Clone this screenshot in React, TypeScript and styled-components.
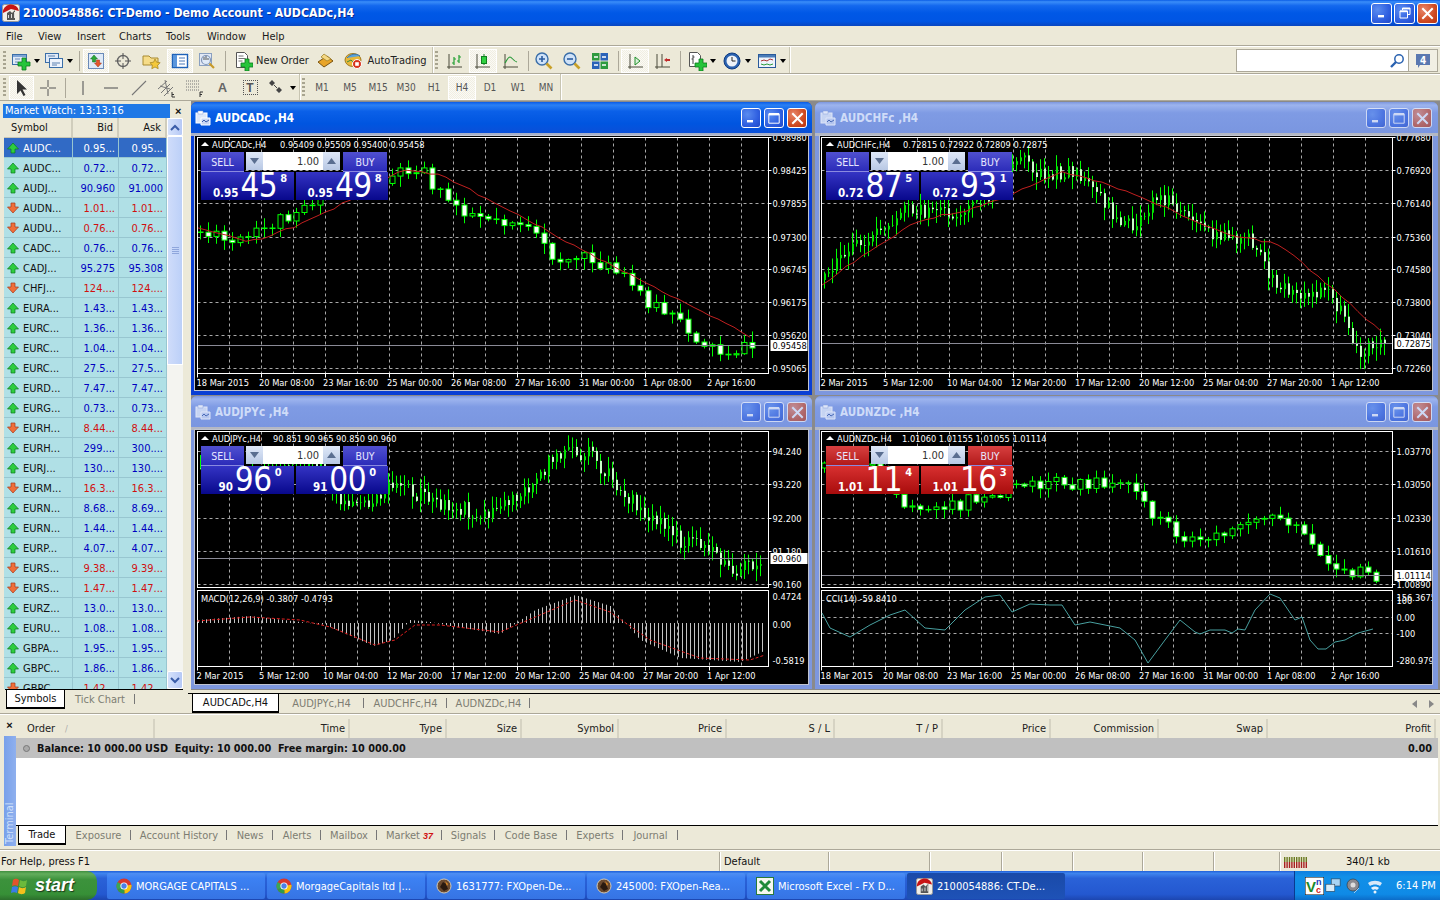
import React from "react";
import styled, { createGlobalStyle } from "styled-components";

const FONT = `"DejaVu Sans Condensed", "Noto Sans", "Liberation Sans", sans-serif`;

const Global = createGlobalStyle`
  html, body { margin: 0; padding: 0; background: #ece9d8; }
  body { font-family: ${FONT}; font-size: 11px; color: #000; overflow: hidden; }
  * { box-sizing: border-box; }
`;

const Root = styled.div`
  width: 1440px; height: 900px; display: flex; flex-direction: column; overflow: hidden; background: #ece9d8;
`;

/* ---------- title bar ---------- */
const TitleBar = styled.div`
  height: 26px; flex: none; display: flex; align-items: center; padding: 0 2px 0 2px;
  background: linear-gradient(#0a5ce6 0%, #3a8df8 7%, #1468ee 22%, #0058e6 50%, #0055e4 82%, #0a46c0 100%);
`;
const TitleText = styled.span`
  color: #fff; font: bold 12.2px ${FONT}; margin-left: 3px; flex: 1; text-shadow: 1px 1px 0 #0a2a90;
`;
const WinBtn = styled.div<{ $close?: boolean; $small?: boolean; $dim?: boolean }>`
  width: ${p => (p.$small ? 20 : 21)}px; height: ${p => (p.$small ? 20 : 21)}px; margin-left: ${p => (p.$small ? 3 : 2)}px;
  border: 1px solid #fff; border-radius: 3px; display: flex; align-items: center; justify-content: center;
  background: ${p => p.$close ? "radial-gradient(circle at 30% 30%, #e8866a, #cf4a22 60%, #b8330f)" : "radial-gradient(circle at 30% 30%, #5a8cf0, #2f5fe0 60%, #2048c8)"};
  opacity: ${p => (p.$dim ? 0.62 : 1)};
`;

/* ---------- menu ---------- */
const MenuBar = styled.div`
  height: 20px; flex: none; display: flex; align-items: center; padding-left: 6px; background: #ece9d8;
`;
const MenuItem = styled.span<{ $w: number }>`
  width: ${p => p.$w}px; font-size: 11px; color: #1a1a1a;
`;

/* ---------- toolbars ---------- */
const ToolRow = styled.div<{ $h: number }>`
  height: ${p => p.$h}px; flex: none; display: flex; align-items: center; padding-left: 2px;
  border-top: 1px solid #fff; box-shadow: 0 -1px 0 #aca899; background: #ece9d8;
`;
const Grip = styled.div`
  width: 7px; height: 20px; flex: none; margin-right: 0;
  background: repeating-linear-gradient(#a8a490 0 2px, #ece9d8 2px 4px) 1px 0 / 3px 100% no-repeat;
`;
const ToolBtn = styled.div<{ $w: number; $on?: boolean }>`
  width: ${p => p.$w}px; height: 24px; flex: none; display: flex; align-items: center; justify-content: center; gap: 3px;
  color: #333; font-size: 11px;
  ${p => p.$on ? `background: repeating-conic-gradient(#fbfaf5 0 25%, #f0eee2 0 50%) 0 0 / 2px 2px; outline: 1px solid #fff; outline-offset: -1px; box-shadow: inset 0 0 0 1px #ddd;` : ""}
`;
const ToolSep = styled.div<{ $w: number }>`
  width: ${p => p.$w}px; height: 20px; flex: none; position: relative;
  &::after { content: ""; position: absolute; left: 50%; top: 0; bottom: 0; width: 1px; background: #aca899; }
`;
const GroupEnd = styled.div`
  width: 2px; height: 27px; flex: none; background: #fff; border-left: 1px solid #c8c5b2;
`;
const TfLabel = styled.span`
  color: #555; font-size: 10px;
`;
const Caret = styled.i`
  width: 0; height: 0; border: 3px solid transparent; border-top: 4px solid #000; border-bottom: 0; display: block;
`;
const Spacer = styled.div`flex: 1;`;
const SearchBox = styled.div`
  width: 173px; height: 23px; border: 1px solid #aca899; background: #fff; display: flex; align-items: center; justify-content: flex-end; padding-right: 3px;
`;
const ChatBtn = styled.div`
  width: 29px; height: 23px; margin-right: 2px; border: 1px solid #aca899; border-left: 0; background: #f1efe4; display: flex; align-items: center; justify-content: center;
`;

/* ---------- main ---------- */
const Main = styled.div`
  height: 613px; flex: none; display: flex; border-top: 1px solid #aca899;
`;
const WatchPanel = styled.div`
  width: 188px; flex: none; display: flex; flex-direction: column; background: #ece9d8; padding: 2px 5px 0 3px; position: relative;
`;
const WatchHead = styled.div`
  height: 15px; flex: none; display: flex; align-items: center;
`;
const WatchTitle = styled.div`
  width: 167px; height: 14px; background: #1f78e6; color: #fff; font-size: 11px; line-height: 14px; padding-left: 2px;
`;
const CloseX = styled.span`
  font: bold 11px "Liberation Sans", sans-serif; margin-left: 5px; color: #111;
`;
const WatchBody = styled.div`
  flex: none; height: 571px; display: flex; overflow: hidden; margin-left: 1px;
`;
const WatchTable = styled.div`
  width: 163px; flex: none; overflow: hidden;
`;
const WatchHeader = styled.div`
  height: 20px; display: grid; grid-template-columns: 69px 46px 48px; background: #ece9d8; border-bottom: 1px solid #c9c6b5;
`;
const HeadCell = styled.div<{ $right?: boolean }>`
  display: flex; align-items: center; color: #111; font-size: 11px;
  justify-content: ${p => (p.$right ? "flex-end" : "flex-start")};
  padding: ${p => (p.$right ? "0 4px 0 0" : "0 0 0 7px")};
  border-right: 2px solid #d0cdbc;
`;
const Row = styled.div<{ $sel?: boolean; $down?: boolean }>`
  height: 20px; display: grid; grid-template-columns: 69px 46px 48px;
  background: ${p => (p.$sel ? "#316ac5" : "#b0e0e6")};
  color: ${p => (p.$sel ? "#fff" : p.$down ? "#d01010" : "#0000c0")};
`;
const Cell = styled.div<{ $sym?: boolean }>`
  border-right: 1px solid #98c6d0; border-bottom: 1px solid #98c6d0; display: flex; align-items: center; font-size: 11px; gap: 4px;
  justify-content: ${p => (p.$sym ? "flex-start" : "flex-end")};
  padding: ${p => (p.$sym ? "1px 0 0 3px" : "1px 3px 0 0")};
  white-space: nowrap; overflow: hidden;
`;
const SymText = styled.span<{ $sel?: boolean }>` color: ${p => (p.$sel ? "#fff" : "#111")}; `;
const ScrollBar = styled.div`
  width: 16px; flex: none; display: flex; flex-direction: column; background: #f4f4f0;
`;
const ScrollBtn = styled.div`
  height: 18px; flex: none; border: 1px solid #fff; border-radius: 2px; background: linear-gradient(90deg, #d6e2fb, #b6c9f6); display: flex; align-items: center; justify-content: center;
`;
const ScrollThumb = styled.div`
  height: 229px; flex: none; border: 1px solid #fff; background: linear-gradient(90deg, #cfdcfa, #bcd0f8); display: flex; align-items: center; justify-content: center;
`;
const ThumbGrip = styled.div`
  width: 7px; height: 8px; background: repeating-linear-gradient(#8fa6dc 0 1px, transparent 1px 2px);
`;
const PanelTabs = styled.div`
  display: flex; border-top: 1px solid #000; height: 20px; flex: none; margin-left: 2px; margin-right: 0;
`;
const ActiveTab = styled.div<{ $w: number }>`
  width: ${p => p.$w}px; background: #fff; border: 1px solid #000; border-top: 0; border-bottom-width: 2px; display: flex; align-items: center; justify-content: center; color: #111; font-size: 11px; margin-left: 1px;
`;
const PlainTab = styled.div<{ $w: number; $plain?: boolean }>`
  width: ${p => p.$w}px; display: flex; align-items: center; justify-content: center; color: #7d7d72; font-size: 11px; gap: 3px;
  position: relative;
  ${p => p.$plain ? "" : `&::after { content: ""; position: absolute; right: 0; top: 4px; bottom: 5px; width: 1px; background: #777; }`}
`;
const Right = styled.div`
  flex: 1; display: flex; flex-direction: column; min-width: 0;
`;
const Mdi = styled.div`
  height: 589px; flex: none; display: grid; grid-template-columns: 621px 623px; grid-auto-rows: 293px; column-gap: 3px; row-gap: 1px; padding: 1px 2px 0 3px; background: linear-gradient(90deg, #ece9d8 3px, #8a8a8a 3px);
`;
const ChartWin = styled.div<{ $active?: boolean; $right?: boolean }>`
  display: flex; flex-direction: column; border-radius: 6px 6px 0 0; overflow: hidden;
  background: ${p => (p.$active ? "#0a3fd4" : "#7d97de")};
  padding: 0 ${p => (p.$right ? 6 : 4)}px 5px ${p => (p.$right ? 5 : 4)}px;
`;
const ChartTitle = styled.div<{ $active?: boolean; $right?: boolean }>`
  height: 34px; flex: none; display: flex; align-items: center; padding-top: 1px; margin: 0 ${p => (p.$right ? -6 : -4)}px 0 ${p => (p.$right ? -5 : -4)}px; padding-left: ${p => (p.$right ? 5 : 4)}px; padding-right: ${p => (p.$right ? 6 : 5)}px;
  background: ${p => p.$active
    ? "linear-gradient(#0a5ce6 0%, #2b80f4 10%, #0b60e8 30%, #0055e0 70%, #0a4fd8 100%)"
    : "linear-gradient(#7d97de 0%, #9db4ee 10%, #7f9be4 35%, #7a96e0 100%)"};
  border-bottom: 3px solid ${p => (p.$active ? "#a8b0c8" : "#b4b8c4")};
`;
const ChartName = styled.span<{ $active?: boolean }>`
  flex: 1; margin-left: 4px; font: bold 11.6px ${FONT}; color: ${p => (p.$active ? "#fff" : "#cfdcf8")};
`;
const ChartBody = styled.div`
  position: relative; flex: 1; background: #000; overflow: hidden; box-shadow: 0 0 0 1px #c0c4d0;
`;
const ChartSvg = styled.svg`
  display: block; width: 100%; height: 100%;
`;
const ChartLabel = styled.text`
  font-family: ${FONT}; font-size: 9.2px; fill: #fff;
`;
const BoxLabel = styled.text`
  font-family: ${FONT}; font-size: 9.2px; fill: #000;
`;

/* trade panel */
const TradePanel = styled.div`
  position: absolute; left: 6px; top: 16px; width: 187px; display: grid; grid-template-columns: 93px 94px; grid-template-rows: 20px 28px;
`;
const TopRow = styled.div`
  grid-column: 1 / 3; display: flex;
`;
const ActBtn = styled.div<{ $red?: boolean; $w: number; $ml?: number }>`
  width: ${p => p.$w}px; margin-left: ${p => p.$ml || 0}px;
  background: ${p => p.$red ? "linear-gradient(#d84040, #b01818)" : "linear-gradient(#5050d0, #2a2ab8)"};
  color: #e8e8ff; font-size: 10.5px; display: flex; align-items: center; justify-content: center;
  box-shadow: inset 0 -1px 0 #8a8ae0;
`;
const Step = styled.div<{ $flush?: boolean }>`
  width: 17px; background: linear-gradient(#dfe8f8, #b8c8e4); display: flex; align-items: center; justify-content: center; margin-left: ${p => (p.$flush ? 0 : 2)}px; margin-bottom: 2px;
`;
const Lot = styled.div`
  width: 60px; background: #fff; color: #333; font-size: 11px; display: flex; align-items: center; justify-content: flex-end; padding-right: 4px; margin-bottom: 2px;
`;
const Quote = styled.div<{ $red?: boolean; $ml?: number }>`
  margin-left: ${p => p.$ml || 0}px; color: #fff; display: flex; align-items: flex-end; justify-content: center; position: relative; padding-left: 5px;
  background: ${p => p.$red ? "linear-gradient(#d83030, #a80c0c)" : "linear-gradient(#3434c4, #08088c)"};
`;
const QSmall = styled.span`
  font: bold 11.5px ${FONT}; margin-bottom: 0; margin-right: 2px;
`;
const QBig = styled.span`
  font: 33px/28px ${FONT}; letter-spacing: -0.5px;
`;
const QSup = styled.span`
  font: bold 11px ${FONT}; align-self: flex-start; margin: 0 0 0 3px;
`;

/* chart tab bar */
const ChartTabs = styled.div`
  flex: 1; display: flex; margin-top: 3px; border-top: 1px solid #000; padding-left: 3px; height: 20px; position: relative;
`;
const TabArrows = styled.div`
  position: absolute; right: 6px; top: 3px; display: flex; gap: 10px; align-items: center; height: 14px;
`;

/* ---------- terminal ---------- */
const Terminal = styled.div`
  height: 136px; flex: none; display: flex; border-top: 1px solid #aca899; box-shadow: inset 0 1px 0 #fff; padding: 5px 2px 3px 3px;
`;
const TermSide = styled.div`
  width: 13px; flex: none; display: flex; flex-direction: column; align-items: center;
`;
const SideLabel = styled.div`
  flex: 1; margin-top: 5px; width: 12px; background: linear-gradient(90deg, #8fb0ee, #78a0ea); color: #cfe0fa; font-size: 11px; writing-mode: vertical-rl; transform: rotate(180deg); text-align: left; line-height: 12px; padding-top: 2px;
`;
const TermMain = styled.div`
  flex: 1; display: flex; flex-direction: column; min-width: 0;
`;
const TermHead = styled.div`
  height: 19px; flex: none; display: flex; background: #ece9d8;
`;
const Col = styled.div<{ $w: number; $left?: boolean }>`
  width: ${p => p.$w}px; flex: none; color: #222; font-size: 11px; display: flex; align-items: center; gap: 10px;
  justify-content: ${p => (p.$left ? "flex-start" : "flex-end")};
  padding: ${p => (p.$left ? "0 0 0 11px" : "0 3px 0 0")};
  border-right: 2px solid #d6d3c3;
`;
const Balance = styled.div`
  height: 20px; flex: none; display: flex; align-items: center; background: #c0c0c0; color: #111; font-weight: bold; font-size: 10.8px; padding: 0 6px 0 7px; gap: 7px;
`;
const BalDot = styled.span`
  width: 7px; height: 7px; border-radius: 50%; border: 1px solid #777; background: #aaa; display: block; flex: none;
`;
const BalText = styled.span` flex: 1; white-space: pre; `;
const TermBlank = styled.div` flex: 1; background: #fff; `;
const TermTabs = styled.div`
  height: 21px; flex: none; display: flex; border-top: 1px solid #000; padding-left: 1px; padding-bottom: 1px;
`;
const MarketBadge = styled.b`
  font: italic bold 9px "Liberation Sans", sans-serif; color: #d01010;
`;
const SortMark = styled.span` color: #aaa; font-size: 9px; `;

/* ---------- status bar ---------- */
const Status = styled.div`
  height: 22px; flex: none; display: flex; border-top: 1px solid #aca899; box-shadow: inset 0 1px 0 #fff; padding-top: 2px;
`;
const StatusCell = styled.div<{ $w: number; $first?: boolean }>`
  width: ${p => p.$w}px; flex: none; font-size: 11px; color: #111; display: flex; align-items: center; gap: 38px; padding-left: ${p => (p.$first ? 1 : 4)}px;
  ${p => (p.$first ? "" : "border-left: 1px solid #aca899; box-shadow: inset 1px 0 0 #fff;")}
`;

/* ---------- taskbar ---------- */
const Taskbar = styled.div`
  height: 29px; flex: none; display: flex; align-items: stretch;
  background: linear-gradient(#1f5fd8 0%, #3f85ee 8%, #2a62d8 25%, #2458d0 80%, #1c46b0 100%);
`;
const StartBtn = styled.div`
  width: 97px; flex: none; display: flex; align-items: center; gap: 5px; padding-left: 10px; margin-right: 10px;
  border-radius: 0 10px 10px 0; background: linear-gradient(#3f8f3f 0%, #62ad5c 10%, #3c923c 30%, #379037 80%, #2c6e2c 100%);
`;
const StartText = styled.span`
  color: #fff; font: italic bold 18px "Liberation Sans", sans-serif; text-shadow: 1px 1px 1px #1a3a1a;
`;
const TaskBtn = styled.div<{ $on?: boolean }>`
  width: 158px; flex: none; margin: 2px 2px 1px 0; border-radius: 2px; display: flex; align-items: center; gap: 4px; padding-left: 9px; color: #fff; font-size: 11px; white-space: nowrap;
  background: ${p => p.$on ? "linear-gradient(#1a4aa8, #1e52b7)" : "linear-gradient(#4f8ef2, #3c81f3 20%, #3674e4)"};
`;
const Tray = styled.div`
  width: 146px; margin-left: auto; flex: none; display: flex; align-items: center; padding-left: 10px; gap: 1px; color: #fff; font-size: 11px; border-left: 1px solid #0a3a90; white-space: nowrap;
  background: linear-gradient(#0f7fe0, #1290e8 20%, #0f8ae6 80%, #0c6cc8);
`;
const TrayTime = styled.span` margin-left: 11px; font-size: 11px; white-space: nowrap; `;

/* ---------- icons ---------- */
const Svg: React.FC<{ s?: number; w?: number; h?: number; children: React.ReactNode }> = ({ s = 20, w, h, children }) => (
  <svg width={w ?? s} height={h ?? s} viewBox={`0 0 ${w ?? s} ${h ?? s}`} style={{ display: "block", flex: "none" }}>{children}</svg>
);
const Plus = ({ x = 0, y = 0 }: { x?: number; y?: number }) => (
  <path transform={`translate(${x} ${y})`} d="M4 0h4v4h4v4H8v4H4V8H0V4h4z" fill="#25c43a" stroke="#0d7a1e" strokeWidth=".8" />
);
const MtLogo = ({ s = 18 }: { s?: number }) => (
  <svg width={s} height={s} viewBox="0 0 18 18" style={{ display: "block", flex: "none" }}>
    <rect x=".5" y=".5" width="17" height="17" rx="2" fill="#f2efe8" stroke="#999" />
    <path d="M1 9a8 7.500 0 0 1 16-2L9 5z" fill="#c81414" />
    <path d="M5 16V9l3-2 2 2 3-3v10z" fill="#555" />
    <path d="M6 11h1v3H6zm3-1h1v4H9zm3-2h1v6h-1z" fill="#ddd" />
  </svg>
);
const ChromeIcon = () => (
  <Svg s={16}>
    <circle cx="8" cy="8" r="7.500" fill="#d8372c" />
    <path d="M8 8 1.500 11.700A7.500 7.500 0 0 1 1.600 4z" fill="#3aa655" />
    <path d="M8 8l7.400-1.200a7.500 7.500 0 0 1-7 8.700z" fill="#f4c20d" />
    <path d="M8 8 1.500 11.700A7.500 7.500 0 0 0 8.600 15.500z" fill="#2f9b4d" />
    <circle cx="8" cy="8" r="3.600" fill="#fff" /><circle cx="8" cy="8" r="2.700" fill="#4a80e8" />
  </Svg>
);
const CoinIcon = () => (
  <Svg s={16}>
    <circle cx="8" cy="8" r="7" fill="#6a4a30" stroke="#d0c8b8" />
    <path d="M4 9l3-5 3 2 2 5-4 2z" fill="#2a1a10" /><path d="M9 3l3 3-1 2z" fill="#e08a20" />
  </Svg>
);
const ExcelIcon = () => (
  <Svg s={18}>
    <rect x=".5" y=".5" width="17" height="17" fill="#f5f8f0" stroke="#2a7a3a" />
    <path d="M4 4l10 10M14 4 4 14" stroke="#1e8a38" strokeWidth="3" />
  </Svg>
);
const WinFlag = () => (
  <Svg s={20}>
    <path d="M3 4c3-2 4-1 6 0l-1 6c-2-1-4-1-6 0z" fill="#e2542c" />
    <path d="M10 4c2 1 4 2 7 0l-1 6c-3 2-5 1-7 0z" fill="#6cba3c" />
    <path d="M2 11c2-1 4-1 6 0l-1 6c-2-1-4-1-6 0z" fill="#3a7ce8" />
    <path d="M9 11c2 1 4 2 7 0l-1 6c-3 2-5 1-7 0z" fill="#f4c01c" />
  </Svg>
);
const Min = () => <svg width="10" height="10" viewBox="0 0 10 10"><rect x="1" y="7" width="6" height="2.400" fill="#fff" /></svg>;
const Max = () => <svg width="12" height="12" viewBox="0 0 12 12"><path d="M.8 1.800h10.400v9.400H.8z" fill="none" stroke="#fff" /><rect x="1" y="1" width="10" height="2.400" fill="#fff" /></svg>;
const Restore = () => <svg width="12" height="12" viewBox="0 0 12 12"><path d="M3.500 3V1h7.500v6.500H9M1 4h7.500v7H1z" fill="none" stroke="#fff" /><rect x="1" y="3.600" width="7.500" height="1.600" fill="#fff" /><rect x="3.500" y="1" width="7.500" height="1.400" fill="#fff" /></svg>;
const CloseI = () => <svg width="13" height="13" viewBox="0 0 13 13"><path d="M2 2l9 9M11 2l-9 9" stroke="#fff" strokeWidth="2" strokeLinecap="square" /></svg>;

const WinChartIcon = ({ dim }: { dim?: boolean }) => (
  <svg width="16" height="16" viewBox="0 0 16 16" style={{ display: "block", flex: "none", opacity: dim ? 0.75 : 1 }}>
    <rect x="1" y="3" width="11" height="10" fill="#dfe8f8" stroke="#fff" />
    <path d="M3 1h5v3H3z" fill="#fff" stroke="#8aa0d8" strokeWidth=".5" />
    <path d="M6 8h9v7H6z" fill="#c8d6f4" stroke="#fff" />
    <path d="M7 12l2-2 2 2 3-2" stroke="#3a5ca8" fill="none" />
  </svg>
);

const I = {
  newChart: <Svg><rect x="1.500" y="3.500" width="14" height="10" fill="#dfe9f7" stroke="#3a6ea8" /><rect x="2" y="4" width="13" height="2" fill="#7fa4d6" /><path d="M4 8h5M4 11h3" stroke="#6a8ab8" /><Plus x={7} y={7} /></Svg>,
  profiles: <Svg><rect x="1.500" y="2.500" width="13" height="9" fill="#dfe9f7" stroke="#3a6ea8" /><rect x="5.500" y="7.500" width="13" height="9" fill="#eef3fb" stroke="#3a6ea8" /><path d="M8 12h8M8 14h5M4 5h7" stroke="#5a80b0" /></Svg>,
  watch: <Svg><rect x="2.500" y="2.500" width="15" height="15" fill="#dfeaf8" stroke="#6a8ab8" /><path d="M8 4l3.500 4H9.500v3h-3V8H4.500z" fill="#2aa838" stroke="#106a1a" strokeWidth=".5" /><path d="M12 16l-3.500-4h2V9h3v3h2z" fill="#e4572c" stroke="#a03010" strokeWidth=".5" /></Svg>,
  crossCircle: <Svg><circle cx="10" cy="10" r="5.500" fill="none" stroke="#666" strokeWidth="1.400" /><path d="M10 2v6M10 12v6M2 10h6M12 10h6" stroke="#555" /></Svg>,
  folderStar: <Svg><path d="M1 5h6l2 2h7v7H1z" fill="#f6dc88" stroke="#a88a30" /><path d="M13 8l1.600 3.200 3.600.5-2.600 2.500.6 3.500-3.200-1.700-3.200 1.700.6-3.500L8 11.700l3.600-.5z" fill="#f4c83a" stroke="#a0801a" strokeWidth=".7" /></Svg>,
  nav: <Svg><rect x="2.500" y="3.500" width="15" height="13" fill="#fff" stroke="#1e62b8" strokeWidth="1.400" /><rect x="3" y="4" width="4" height="12" fill="#5a96dc" /><path d="M9 7h6M9 10h6M9 13h6" stroke="#4a78b8" /></Svg>,
  term: <Svg><rect x="2.500" y="2.500" width="12" height="12" fill="#e2e8f4" stroke="#8aa0c0" /><circle cx="9" cy="9" r="4.500" fill="#dfeaf8" stroke="#7f95b8" strokeWidth="1.200" /><path d="M7 9V6M9 9V5M11 9V7" stroke="#555" /><path d="M12.500 12.500l4.500 4.500" stroke="#c89a28" strokeWidth="2.200" /></Svg>,
  order: <Svg><path d="M3.500 1.500h8l3 3v12h-11z" fill="#fff" stroke="#555" /><path d="M5.500 5h5M5.500 7.500h7M5.500 10h4" stroke="#777" /><Plus x={8} y={8} /></Svg>,
  gold: <Svg><path d="M2 11l9-6 6 5-9 6z" fill="#e8a428" stroke="#7a5410" /><path d="M8 3l7 5-4 2-6-4z" fill="#f4d884" stroke="#9a7a20" strokeWidth=".7" /></Svg>,
  auto: <Svg><ellipse cx="9" cy="9" rx="8" ry="6.500" fill="#e8b83a" stroke="#a07a20" /><path d="M3 7c3-4 9-5 13-2" fill="#5aa4dc" stroke="#3a78b0" /><path d="M3 11l4-2 3 3" fill="none" stroke="#3a8a3a" /><circle cx="13" cy="13" r="4.500" fill="#d8341c" stroke="#fff" /><rect x="11.200" y="11.200" width="3.600" height="3.600" fill="#fff" /></Svg>,
  bars: <Svg><path d="M4 3v13h13" fill="none" stroke="#4a4a3a" /><path d="M2 16h2M4 18v-2" stroke="#4a4a3a" /><path d="M9 6v8M7 12h2M9 8h2M14 4v8M12 10h2M14 6h2" stroke="#20a030" strokeWidth="1.200" /></Svg>,
  candles: <Svg><path d="M4 3v13h13" fill="none" stroke="#4a4a3a" /><path d="M2 16h2M4 18v-2" stroke="#4a4a3a" /><path d="M11 3v11" stroke="#108020" /><rect x="8.500" y="5.500" width="5" height="7" fill="#30d040" stroke="#108020" /></Svg>,
  lineChart: <Svg><path d="M4 3v13h13" fill="none" stroke="#4a4a3a" /><path d="M2 16h2M4 18v-2" stroke="#4a4a3a" /><path d="M4 12c2-3 3-6 5-6s3 4 7 5" fill="none" stroke="#2a9a3a" strokeWidth="1.100" /></Svg>,
  zoomIn: <Svg><circle cx="8" cy="8" r="6" fill="#cfe2f8" stroke="#3a6ea8" strokeWidth="1.400" /><path d="M5 8h6M8 5v6" stroke="#2a5ca0" strokeWidth="1.600" /><path d="M12.500 12.500l5 5" stroke="#c8a028" strokeWidth="2.600" /></Svg>,
  zoomOut: <Svg><circle cx="8" cy="8" r="6" fill="#cfe2f8" stroke="#3a6ea8" strokeWidth="1.400" /><path d="M5 8h6" stroke="#2a5ca0" strokeWidth="1.600" /><path d="M12.500 12.500l5 5" stroke="#c8a028" strokeWidth="2.600" /></Svg>,
  tile: <Svg><rect x="2" y="2" width="7.500" height="7.500" fill="#2e9a3e" /><rect x="10.500" y="2" width="7.500" height="7.500" fill="#2a62b8" /><rect x="2" y="10.500" width="7.500" height="7.500" fill="#2a62b8" /><rect x="10.500" y="10.500" width="7.500" height="7.500" fill="#2e9a3e" /><path d="M4 6h4M12 6h4M4 14h4M12 14h4" stroke="#fff" strokeWidth="1.600" /></Svg>,
  autoScroll: <Svg><path d="M5 3v13h13" fill="none" stroke="#4a4a3a" /><path d="M3 16h2M5 18v-2" stroke="#4a4a3a" /><path d="M10 6l5 4-5 4z" fill="#d8f0d8" stroke="#20902a" /></Svg>,
  shift: <Svg><path d="M4 3v13h13" fill="none" stroke="#4a4a3a" /><path d="M2 16h2M4 18v-2M9 3v13" stroke="#4a4a3a" /><path d="M11 9l3-2v1h3v2h-3v1z" fill="#c02a2a" /></Svg>,
  indicator: <Svg><path d="M2.500 1.500h8l3 3v11h-11z" fill="#fff" stroke="#555" /><path d="M6 4v9M4.500 8H6M6 6h1.500" stroke="#444" /><Plus x={8} y={8} /></Svg>,
  clock: <Svg><circle cx="10" cy="10" r="8" fill="#2a62b0" stroke="#0e3a80" /><circle cx="10" cy="10" r="5.500" fill="#eef2f8" /><path d="M10 6v4h3.500" stroke="#222" fill="none" /></Svg>,
  template: <Svg><rect x="1.500" y="3.500" width="17" height="13" fill="#eef3fb" stroke="#2a5a9a" /><rect x="2" y="4" width="16" height="2.500" fill="#4a7cb8" /><path d="M4 10l3-1 3 1 3-2 3 1" fill="none" stroke="#a83030" /><path d="M4 13l3 1 3-1 3 1 3-1" fill="none" stroke="#2a9a3a" /></Svg>,
  cursor: <Svg><path d="M5 2v14l3.500-3.500 3 5.500 2-1-3-5.500H15z" fill="#333" /></Svg>,
  cross: <Svg><path d="M10 2v7M10 11v7M2 10h7M11 10h7" stroke="#555" /></Svg>,
  vline: <Svg><path d="M10 3v14" stroke="#666" strokeWidth="1.200" /></Svg>,
  hline: <Svg><path d="M3 10h14" stroke="#666" strokeWidth="1.200" /></Svg>,
  tline: <Svg><path d="M3 17L17 3" stroke="#777" strokeWidth="1.100" /></Svg>,
  channel: <Svg><path d="M1 11l9-8M4 15l9-9M7 18l9-9M8 2l3 14M3 8l10 3" stroke="#777" fill="none" /><path d="M15 14v5h3M15 16.500h2" stroke="#333" fill="none" /></Svg>,
  fibo: <Svg><path d="M1 3h14M1 6h14M1 9h14M1 12h14" stroke="#777" strokeDasharray="1 1" fill="none" /><path d="M15 14v5M15 14h3M15 16.500h2" stroke="#333" fill="none" /></Svg>,
  arrows: <Svg><path d="M5 2l3 3-3 3-3-3zM12 9l3 3-3 3-3-3z" fill="#444" /><path d="M7 7l3 3" stroke="#444" /></Svg>,
  glass: <Svg s={16}><circle cx="10" cy="6" r="4.200" fill="#fff" stroke="#2a62b0" strokeWidth="1.500" /><path d="M7 9l-5 5" stroke="#2a62b0" strokeWidth="2.400" /></Svg>,
  chat: <Svg w={18} h={18}><path d="M2 2h14v11H6l-2 3v-3H2z" fill="#5a78b0" /></Svg>,
};

const AText = styled.span` font: bold 13px "Liberation Sans", sans-serif; color: #666; `;
const TBox = styled.span`
  width: 15px; height: 15px; display: flex; align-items: center; justify-content: center; font: bold 12px "Liberation Sans", sans-serif; color: #555; border: 1px dotted #555;
`;
const Lbl = styled.span` color: #222; font-size: 11px; `;
const ChatNum = styled.b`
  position: absolute; color: #fff; font: bold 10px ${FONT}; top: 3px; left: 6px;
`;
const ChatWrap = styled.span` position: relative; display: block; `;

/* ---------- chart drawing ---------- */
type P = [number, number];
function rng(seed: number) {
  return () => {
    seed |= 0; seed = (seed + 0x6d2b79f5) | 0;
    let t = Math.imul(seed ^ (seed >>> 15), 1 | seed);
    t = (t + Math.imul(t ^ (t >>> 7), 61 | t)) ^ t;
    return ((t ^ (t >>> 14)) >>> 0) / 4294967296;
  };
}
function interp(pts: P[], x: number) {
  for (let i = 0; i < pts.length - 1; i++) {
    if (x <= pts[i + 1][0]) {
      const t = (x - pts[i][0]) / (pts[i + 1][0] - pts[i][0]);
      return pts[i][1] + (pts[i + 1][1] - pts[i][1]) * t;
    }
  }
  return pts[pts.length - 1][1];
}
const poly = (pts: P[]) => pts.map(p => p.join(",")).join(" ");
function wobble(pts: P[], seed: number) {
  const r = rng(seed);
  const out: P[] = [];
  for (let x = pts[0][0]; x <= pts[pts.length - 1][0]; x += 8) out.push([x, +(interp(pts, x) + (r() - 0.5) * 2.4).toFixed(1)]);
  return out;
}

const Candles: React.FC<{ ctrl: P[]; step: number; seed: number; noise: number; width: number; startX: number }> = ({ ctrl, step, seed, noise, width, startX }) => {
  const r = rng(seed);
  const items: React.ReactNode[] = [];
  let prev = interp(ctrl, startX);
  const end = ctrl[ctrl.length - 1][0];
  const wick = width > 2 ? 1.3 : 1.5;
  for (let x = startX; x <= end; x += step) {
    const close = interp(ctrl, x) + (r() - 0.5) * noise * 2;
    const top = Math.min(prev, close);
    const bot = Math.max(prev, close);
    const hi = top - r() * noise * wick - 1;
    const lo = bot + r() * noise * wick + 1;
    const bull = close < prev;
    items.push(<line key={"w" + x} x1={x + 0.5} x2={x + 0.5} y1={hi} y2={lo} stroke="#00ff00" />);
    if (width > 2) {
      items.push(<rect key={"b" + x} x={x - width / 2 + 0.5} y={top} width={width} height={Math.max(bot - top, 0.5)} fill={bull ? "#000" : "#fff"} stroke="#00ff00" />);
    } else {
      items.push(<rect key={"b" + x} x={x} y={top} width={2} height={Math.max(bot - top, 0.5)} fill={bull ? "#00e000" : "#c8ffc8"} />);
    }
    prev = close;
  }
  return <>{items}</>;
};

type Axis = [string, number];
interface ChartDef {
  title: string; ohlc: string; ohlcX: number; active?: boolean; right?: boolean; left: number; top: number;
  ctrl: P[]; step: number; seed: number; noise: number; cw: number; startX: number; ma?: P[];
  axis: Axis[]; bid: [string, number]; times: string[]; mainBottom: number;
  sub?: "macd" | "cci"; subAxis?: Axis[]; subName?: string;
  s0: string; b1: string; b2: string; a0: string; a1: string; a2: string; red?: boolean;
}

const T_A = ["18 Mar 2015", "20 Mar 08:00", "23 Mar 16:00", "25 Mar 00:00", "26 Mar 08:00", "27 Mar 16:00", "31 Mar 00:00", "1 Apr 08:00", "2 Apr 16:00"];
const T_B = ["2 Mar 2015", "5 Mar 12:00", "10 Mar 04:00", "12 Mar 20:00", "17 Mar 12:00", "20 Mar 12:00", "25 Mar 04:00", "27 Mar 20:00", "1 Apr 12:00"];

const CCI: P[] = [[822,613],[830,628],[850,637],[870,625],[890,615],[905,610],[925,628],[945,630],[965,610],[985,597],[1000,595],[1012,612],[1030,604],[1050,605],[1062,605],[1075,625],[1090,622],[1105,625],[1120,628],[1135,640],[1148,663],[1165,640],[1180,620],[1195,632],[1200,634],[1210,630],[1225,630],[1232,633],[1238,629],[1245,630],[1255,610],[1270,594],[1280,598],[1295,620],[1302,617],[1310,640],[1318,649],[1326,649],[1335,642],[1345,640],[1358,633],[1373,629]];
const SIG: P[] = [[197,621],[250,617],[300,620],[330,627],[375,645],[395,640],[415,625],[440,625],[500,632],[540,615],[575,600],[610,612],[650,640],[700,658],[750,660],[765,655]];
const HIST: P[] = [[197,620],[250,616],[300,622],[325,625],[373,646],[392,640],[410,620],[430,622],[450,626],[500,634],[535,610],[575,595],[610,606],[640,640],[680,658],[740,662],[766,650]];

const CHARTS: ChartDef[] = [
  {
    title: "AUDCADc,H4", ohlc: "0.95409 0.95509 0.95400 0.95458", ohlcX: 280, active: true, left: 195, top: 136,
    ctrl: [[200,232],[235,245],[260,232],[290,212],[320,195],[380,180],[400,170],[420,165],[440,195],[470,212],[520,222],[550,255],[600,262],[630,285],[660,310],[700,340],[720,352],[752,347]],
    step: 8, seed: 11, noise: 8, cw: 5, startX: 200,
    ma: [[198,228],[250,242],[300,225],[350,200],[400,170],[440,175],[500,205],[600,260],[680,300],[752,337]],
    axis: [["0.98980",137],["0.98425",170],["0.97855",203],["0.97300",237],["0.96745",269],["0.96175",302],["0.95620",335],["0.95065",368]],
    bid: ["0.95458", 345], times: T_A, mainBottom: 373,
    s0: "0.95", b1: "45", b2: "8", a0: "0.95", a1: "49", a2: "8",
  },
  {
    title: "AUDCHFc,H4", ohlc: "0.72815 0.72922 0.72809 0.72875", ohlcX: 903, right: true, left: 820, top: 136,
    ctrl: [[824,280],[850,250],[880,225],[910,210],[940,215],[970,210],[1000,185],[1020,158],[1040,175],[1075,170],[1090,185],[1110,210],[1130,228],[1160,195],[1190,225],[1230,240],[1255,240],[1270,280],[1300,295],[1330,295],[1360,350],[1385,342]],
    step: 4, seed: 23, noise: 8, cw: 2, startX: 824,
    ma: [[822,285],[870,250],[920,220],[970,210],[1010,195],[1060,172],[1110,185],[1160,205],[1220,232],[1280,245],[1340,295],[1385,335]],
    axis: [["0.77680",137],["0.76920",170],["0.76140",203],["0.75360",237],["0.74580",269],["0.73800",302],["0.73040",335],["0.72260",368]],
    bid: ["0.72875", 343], times: T_B, mainBottom: 373,
    s0: "0.72", b1: "87", b2: "5", a0: "0.72", a1: "93", a2: "1",
  },
  {
    title: "AUDJPYc,H4", ohlc: "90.851 90.965 90.850 90.960", ohlcX: 273, left: 195, top: 430,
    ctrl: [[200,468],[322,470],[335,500],[370,510],[390,480],[420,495],[460,510],[500,510],[530,490],[555,450],[590,455],[620,490],[650,515],[680,540],[710,550],[735,570],[762,560]],
    step: 4, seed: 37, noise: 8, cw: 2, startX: 200,
    axis: [["94.240",451],["93.220",484],["92.200",518],["91.180",551],["90.160",584]],
    bid: ["90.960", 558], times: T_B, mainBottom: 587, sub: "macd", subName: "MACD(12,26,9) -0.3807 -0.4793",
    subAxis: [["0.4724",596],["0.00",624],["-0.5819",660]],
    s0: "90", b1: "96", b2: "0", a0: "91", a1: "00", a2: "0",
  },
  {
    title: "AUDNZDc,H4", ohlc: "1.01060 1.01155 1.01055 1.01114", ohlcX: 902, right: true, left: 820, top: 430, red: true,
    ctrl: [[824,468],[888,470],[900,500],[940,510],[970,500],[1010,490],[1060,482],[1130,485],[1150,515],[1180,535],[1220,540],[1260,520],[1280,512],[1310,540],[1330,570],[1380,575]],
    step: 8, seed: 51, noise: 7, cw: 5, startX: 824,
    axis: [["1.03770",451],["1.03050",484],["1.02330",518],["1.01610",551],["1.00890",584]],
    bid: ["1.01114", 575], times: T_A, mainBottom: 587, sub: "cci", subName: "CCI(14) -59.8410",
    subAxis: [["156.3675",597],["100",600],["0.00",617],["-100",633],["-280.979",660]],
    s0: "1.01", b1: "11", b2: "4", a0: "1.01", a1: "16", a2: "3",
  },
];

const ChartView: React.FC<{ c: ChartDef }> = ({ c }) => {
  const L = c.left + (c.right ? 1.5 : 2.5);
  const R = L + 571;
  const T = c.top + 1.5;
  const B = c.mainBottom + 0.5;
  const subTop = 590.5; const subBot = 666.5;
  const plotBottom = c.sub ? subBot : B;
  const gridXs: number[] = [];
  for (let x = L + 32; x < R; x += 32) gridXs.push(x);
  const ys = c.axis.map(a => a[1] + 0.5);
  const hist: number[] = [];
  if (c.sub === "macd") for (let x = 198; x < 766; x += 4) hist.push(x);
  return (
    <ChartSvg viewBox={`${c.left} ${c.top} ${c.right ? 612 : 613} 254`} preserveAspectRatio="none">
      {gridXs.map(x => <line key={"gv" + x} x1={x} x2={x} y1={T} y2={B} stroke="#a8a8a8" strokeDasharray="3 3" />)}
      {ys.map(y => <line key={"gh" + y} x1={L} x2={R} y1={y} y2={y} stroke="#a8a8a8" strokeDasharray="3 3" />)}
      <Candles ctrl={c.ctrl} step={c.step} seed={c.seed} noise={c.noise} width={c.cw} startX={c.startX} />
      {c.ma && <polyline points={poly(wobble(c.ma, c.seed + 3))} fill="none" stroke="#c02020" strokeWidth="1" />}
      <line x1={L} x2={R} y1={c.bid[1] + 0.5} y2={c.bid[1] + 0.5} stroke="#8a8a96" />
      <rect x={L} y={T} width={R - L} height={B - T} fill="none" stroke="#fff" />
      {c.sub && (
        <>
          {gridXs.map(x => <line key={"sv" + x} x1={x} x2={x} y1={subTop} y2={subBot} stroke="#a8a8a8" strokeDasharray="3 3" />)}
          {c.sub === "cci" && [600.5, 617.5, 633.5].map(y => <line key={y} x1={L} x2={R} y1={y} y2={y} stroke="#a8a8a8" strokeDasharray="3 3" />)}
          <rect x={L} y={subTop} width={R - L} height={subBot - subTop} fill="none" stroke="#fff" />
          {hist.map(x => <line key={"h" + x} x1={x + 0.5} x2={x + 0.5} y1={623} y2={interp(HIST, x)} stroke="#c4c4c4" />)}
          {c.sub === "macd" && <polyline points={poly(SIG)} fill="none" stroke="#e02020" strokeDasharray="3 2" />}
          {c.sub === "cci" && <polyline points={poly(CCI)} fill="none" stroke="#48a0a0" />}
          <ChartLabel x={c.left + 6} y={602}>{c.subName}</ChartLabel>
          {c.subAxis?.map(([t, y]) => <ChartLabel key={t} x={R + 4} y={y + 4}>{t}</ChartLabel>)}
        </>
      )}
      {gridXs.filter((_, i) => i % 2 === 1).map(x => <line key={"t" + x} x1={x} x2={x} y1={plotBottom} y2={plotBottom + 4} stroke="#fff" />)}
      <line x1={L} x2={L} y1={plotBottom} y2={plotBottom + 4} stroke="#fff" />
      {c.times.map((t, i) => <ChartLabel key={t} x={i === 0 ? L - 1 : L + 64 * i - 2.5} y={plotBottom + 12}>{t}</ChartLabel>)}
      {c.axis.map(([t, y]) => (
        <g key={t}>
          <line x1={R} x2={R + 3} y1={y + 0.5} y2={y + 0.5} stroke="#fff" />
          <ChartLabel x={R + 4} y={y + 4}>{t}</ChartLabel>
        </g>
      ))}
      <rect x={R + 2} y={c.bid[1] - 5} width={37} height={11} fill="#fff" />
      <BoxLabel x={R + 4} y={c.bid[1] + 4}>{c.bid[0]}</BoxLabel>
      <path d={`M${c.left + 6} ${c.top + 10}l4-4 4 4z`} fill="#fff" />
      <ChartLabel x={c.left + 17} y={c.top + 12}>{c.title}</ChartLabel>
      <ChartLabel x={c.ohlcX} y={c.top + 12}>{c.ohlc}</ChartLabel>
    </ChartSvg>
  );
};

const StepArrow = ({ up }: { up?: boolean }) => (
  <svg width="9" height="6" viewBox="0 0 9 6"><path d={up ? "M4.500 0L9 6H0z" : "M0 0h9L4.500 6z"} fill="#5a6e90" /></svg>
);

const ChartWindow: React.FC<{ c: ChartDef }> = ({ c }) => (
  <ChartWin $active={c.active} $right={c.right}>
    <ChartTitle $active={c.active} $right={c.right}>
      <WinChartIcon dim={!c.active} />
      <ChartName $active={c.active}>{c.title.replace(",", " ,")}</ChartName>
      <WinBtn $small $dim={!c.active}><Min /></WinBtn>
      <WinBtn $small $dim={!c.active}><Max /></WinBtn>
      <WinBtn $small $close $dim={!c.active}><CloseI /></WinBtn>
    </ChartTitle>
    <ChartBody>
      <ChartView c={c} />
      <TradePanel>
        <TopRow>
          <ActBtn $w={43} $red={c.red}>SELL</ActBtn>
          <Step><StepArrow /></Step>
          <Lot>1.00</Lot>
          <Step $flush><StepArrow up /></Step>
          <ActBtn $w={44} $ml={3} $red={c.red}>BUY</ActBtn>
        </TopRow>
        <Quote $red={c.red}><QSmall>{c.s0}</QSmall><QBig>{c.b1}</QBig><QSup>{c.b2}</QSup></Quote>
        <Quote $red={c.red} $ml={2}><QSmall>{c.a0}</QSmall><QBig>{c.a1}</QBig><QSup>{c.a2}</QSup></Quote>
      </TradePanel>
    </ChartBody>
  </ChartWin>
);

/* ---------- data ---------- */
const WATCH: [string, string, string, number][] = [
  ["AUDC...", "0.95...", "0.95...", 1], ["AUDC...", "0.72...", "0.72...", 1], ["AUDJ...", "90.960", "91.000", 1],
  ["AUDN...", "1.01...", "1.01...", 0], ["AUDU...", "0.76...", "0.76...", 0], ["CADC...", "0.76...", "0.76...", 1],
  ["CADJ...", "95.275", "95.308", 1], ["CHFJ...", "124....", "124....", 0], ["EURA...", "1.43...", "1.43...", 1],
  ["EURC...", "1.36...", "1.36...", 1], ["EURC...", "1.04...", "1.04...", 1], ["EURC...", "27.5...", "27.5...", 1],
  ["EURD...", "7.47...", "7.47...", 1], ["EURG...", "0.73...", "0.73...", 1], ["EURH...", "8.44...", "8.44...", 0],
  ["EURH...", "299....", "300....", 1], ["EURJ...", "130....", "130....", 1], ["EURM...", "16.3...", "16.3...", 0],
  ["EURN...", "8.68...", "8.69...", 1], ["EURN...", "1.44...", "1.44...", 1], ["EURP...", "4.07...", "4.07...", 1],
  ["EURS...", "9.38...", "9.39...", 0], ["EURS...", "1.47...", "1.47...", 0], ["EURZ...", "13.0...", "13.0...", 1],
  ["EURU...", "1.08...", "1.08...", 1], ["GBPA...", "1.95...", "1.95...", 1], ["GBPC...", "1.86...", "1.86...", 1],
  ["GBPC...", "1.42...", "1.42...", 0],
];
const COLS: [string, number][] = [["Time",195],["Type",97],["Size",75],["Symbol",97],["Price",108],["S / L",108],["T / P",108],["Price",108],["Commission",108],["Swap",109],["Profit",168]];
const TTABS: [string, number][] = [["Exposure",65],["Account History",96],["News",46],["Alerts",48],["Mailbox",56]];
const TTABS2: [string, number][] = [["Signals",53],["Code Base",72],["Experts",56],["Journal",55]];
const TASKS: [React.ReactNode, string, boolean?][] = [
  [<ChromeIcon />, "MORGAGE CAPITALS ..."],
  [<ChromeIcon />, "MorgageCapitals ltd |..."],
  [<CoinIcon />, "1631777: FXOpen-De..."],
  [<CoinIcon />, "245000: FXOpen-Rea..."],
  [<ExcelIcon />, "Microsoft Excel - FX D..."],
  [<MtLogo s={17} />, "2100054886: CT-De...", true],
];

const Arrow = ({ down }: { down?: boolean }) => (
  <svg width="12" height="12" viewBox="0 0 12 12" style={{ flex: "none" }}>
    {down
      ? <path d="M4 1h4v4h3.500L6 11 .5 5H4z" fill="#f0703a" stroke="#a8381a" strokeWidth=".7" />
      : <path d="M6 1l5.500 6H8v4H4V7H.5z" fill="#2ecc40" stroke="#0a7a1e" strokeWidth=".7" />}
  </svg>
);
const Chevron = ({ down, color = "#3a5ca8" }: { down?: boolean; color?: string }) => (
  <svg width="10" height="7" viewBox="0 0 10 7"><path d={down ? "M1 1l4 4 4-4" : "M1 6l4-4 4 4"} fill="none" stroke={color} strokeWidth="2" /></svg>
);

export default function App() {
  return (
    <Root>
      <Global />
      <TitleBar>
        <MtLogo s={18} />
        <TitleText>2100054886: CT-Demo - Demo Account - AUDCADc,H4</TitleText>
        <WinBtn><Min /></WinBtn>
        <WinBtn><Restore /></WinBtn>
        <WinBtn $close><CloseI /></WinBtn>
      </TitleBar>
      <MenuBar>
        {([["File",32],["View",39],["Insert",42],["Charts",47],["Tools",41],["Window",55],["Help",30]] as [string, number][]).map(([m, w]) => <MenuItem key={m} $w={w}>{m}</MenuItem>)}
      </MenuBar>
      <ToolRow $h={28}>
        <Grip />
        <ToolBtn $w={32}>{I.newChart}<Caret /></ToolBtn>
        <ToolBtn $w={34}>{I.profiles}<Caret /></ToolBtn>
        <ToolSep $w={8} />
        <ToolBtn $w={26} $on>{I.watch}</ToolBtn>
        <ToolBtn $w={28}>{I.crossCircle}</ToolBtn>
        <ToolBtn $w={30}>{I.folderStar}</ToolBtn>
        <ToolBtn $w={26} $on>{I.nav}</ToolBtn>
        <ToolBtn $w={28}>{I.term}</ToolBtn>
        <ToolSep $w={8} />
        <ToolBtn $w={84}>{I.order}<Lbl>New Order</Lbl></ToolBtn>
        <ToolBtn $w={26}>{I.gold}</ToolBtn>
        <ToolBtn $w={93}>{I.auto}<Lbl>AutoTrading</Lbl></ToolBtn>
        <GroupEnd />
        <Grip />
        <ToolBtn $w={28}>{I.bars}</ToolBtn>
        <ToolBtn $w={28} $on>{I.candles}</ToolBtn>
        <ToolBtn $w={28}>{I.lineChart}</ToolBtn>
        <ToolSep $w={5} />
        <ToolBtn $w={28}>{I.zoomIn}</ToolBtn>
        <ToolBtn $w={28}>{I.zoomOut}</ToolBtn>
        <ToolBtn $w={28}>{I.tile}</ToolBtn>
        <ToolSep $w={7} />
        <ToolBtn $w={28} $on>{I.autoScroll}</ToolBtn>
        <ToolBtn $w={28}>{I.shift}</ToolBtn>
        <ToolSep $w={6} />
        <ToolBtn $w={36}>{I.indicator}<Caret /></ToolBtn>
        <ToolBtn $w={34}>{I.clock}<Caret /></ToolBtn>
        <ToolBtn $w={36}>{I.template}<Caret /></ToolBtn>
        <GroupEnd />
        <Spacer />
        <SearchBox>{I.glass}</SearchBox>
        <ChatBtn><ChatWrap>{I.chat}<ChatNum>4</ChatNum></ChatWrap></ChatBtn>
      </ToolRow>
      <ToolRow $h={26}>
        <Grip />
        <ToolBtn $w={25} $on>{I.cursor}</ToolBtn>
        <ToolBtn $w={28}>{I.cross}</ToolBtn>
        <ToolSep $w={6} />
        <ToolBtn $w={29}>{I.vline}</ToolBtn>
        <ToolBtn $w={28}>{I.hline}</ToolBtn>
        <ToolBtn $w={28}>{I.tline}</ToolBtn>
        <ToolBtn $w={28}>{I.channel}</ToolBtn>
        <ToolBtn $w={28}>{I.fibo}</ToolBtn>
        <ToolBtn $w={27}><AText>A</AText></ToolBtn>
        <ToolBtn $w={28}><TBox>T</TBox></ToolBtn>
        <ToolBtn $w={35}>{I.arrows}<Caret /></ToolBtn>
        <GroupEnd />
        <Grip />
        {["M1","M5","M15","M30","H1","H4","D1","W1","MN"].map(t => (
          <ToolBtn key={t} $w={28} $on={t === "H4"}><TfLabel>{t}</TfLabel></ToolBtn>
        ))}
        <GroupEnd />
      </ToolRow>
      <Main>
        <WatchPanel>
          <WatchHead><WatchTitle>Market Watch: 13:13:16</WatchTitle><CloseX>×</CloseX></WatchHead>
          <WatchBody>
            <WatchTable>
              <WatchHeader>
                <HeadCell>Symbol</HeadCell>
                <HeadCell $right>Bid</HeadCell>
                <HeadCell $right>Ask</HeadCell>
              </WatchHeader>
              {WATCH.map((r, i) => (
                <Row key={i} $sel={i === 0} $down={!r[3]}>
                  <Cell $sym><Arrow down={!r[3]} /><SymText $sel={i === 0}>{r[0]}</SymText></Cell>
                  <Cell>{r[1]}</Cell>
                  <Cell>{r[2]}</Cell>
                </Row>
              ))}
            </WatchTable>
            <ScrollBar>
              <ScrollBtn><Chevron /></ScrollBtn>
              <ScrollThumb><ThumbGrip /></ScrollThumb>
              <Spacer />
              <ScrollBtn><Chevron down /></ScrollBtn>
            </ScrollBar>
          </WatchBody>
          <PanelTabs>
            <ActiveTab $w={59}>Symbols</ActiveTab>
            <PlainTab $w={70}>Tick Chart</PlainTab>
          </PanelTabs>
        </WatchPanel>
        <Right>
          <Mdi>
            {CHARTS.map(c => <ChartWindow key={c.title} c={c} />)}
          </Mdi>
          <ChartTabs>
            <ActiveTab $w={87}>AUDCADc,H4</ActiveTab>
            <PlainTab $w={85}>AUDJPYc,H4</PlainTab>
            <PlainTab $w={83}>AUDCHFc,H4</PlainTab>
            <PlainTab $w={83}>AUDNZDc,H4</PlainTab>
            <TabArrows>
              <svg width="6" height="8" viewBox="0 0 6 8"><path d="M5 0v8L0 4z" fill="#888" /></svg>
              <svg width="6" height="8" viewBox="0 0 6 8"><path d="M1 0v8l5-4z" fill="#888" /></svg>
            </TabArrows>
          </ChartTabs>
        </Right>
      </Main>
      <Terminal>
        <TermSide>
          <CloseX style={{ margin: 0 }}>×</CloseX>
          <SideLabel>Terminal</SideLabel>
        </TermSide>
        <TermMain>
          <TermHead>
            <Col $w={139} $left>Order <SortMark>/</SortMark></Col>
            {COLS.map(([c, w], i) => <Col key={i} $w={w}>{c}</Col>)}
          </TermHead>
          <Balance>
            <BalDot />
            <BalText>Balance: 10 000.00 USD  Equity: 10 000.00  Free margin: 10 000.00</BalText>
            0.00
          </Balance>
          <TermBlank />
          <TermTabs>
            <ActiveTab $w={48}>Trade</ActiveTab>
            {TTABS.map(([t, w]) => <PlainTab key={t} $w={w}>{t}</PlainTab>)}
            <PlainTab $w={65}>Market <MarketBadge>37</MarketBadge></PlainTab>
            {TTABS2.map(([t, w]) => <PlainTab key={t} $w={w}>{t}</PlainTab>)}
          </TermTabs>
        </TermMain>
      </Terminal>
      <Status>
        <StatusCell $w={719} $first>For Help, press F1</StatusCell>
        <StatusCell $w={109}>Default</StatusCell>
        <StatusCell $w={101} />
        <StatusCell $w={72} />
        <StatusCell $w={71} />
        <StatusCell $w={70} />
        <StatusCell $w={71} />
        <StatusCell $w={66} />
        <StatusCell $w={160}>
          <svg width="24" height="12" viewBox="0 0 24 12" style={{ flex: "none" }}>
            {Array.from({ length: 10 }, (_, i) => (
              <g key={i}>
                <rect x={i * 2.4} y={1} width={1.4} height={5} fill="#6a7a20" />
                <rect x={i * 2.4} y={6} width={1.4} height={6} fill="#a82020" />
              </g>
            ))}
          </svg>
          340/1 kb
        </StatusCell>
      </Status>
      <Taskbar>
        <StartBtn><WinFlag /><StartText>start</StartText></StartBtn>
        {TASKS.map(([ic, t, on], i) => <TaskBtn key={i} $on={on}>{ic}{t}</TaskBtn>)}
        <Tray>
          <svg width="19" height="18" viewBox="0 0 19 18" style={{ flex: "none" }}>
            <rect width="19" height="18" fill="#fff" stroke="#000" />
            <text x="1" y="15" fontSize="15" fontWeight="bold" fill="#1a8a2a" fontFamily="Liberation Sans">V</text>
            <text x="11" y="8" fontSize="9" fontWeight="bold" fill="#1a3ac0" fontFamily="Liberation Sans">n</text>
            <text x="11" y="16" fontSize="9" fontWeight="bold" fill="#d02020" fontFamily="Liberation Sans">c</text>
          </svg>
          <svg width="16" height="18" viewBox="0 0 18 18" style={{ flex: "none" }}>
            <rect x="7" y="1" width="10" height="8" fill="#a8d4f4" stroke="#234" strokeWidth=".6" />
            <rect x="1" y="7" width="10" height="8" fill="#d8ecfa" stroke="#234" strokeWidth=".6" />
          </svg>
          <svg width="18" height="18" viewBox="0 0 18 18" style={{ flex: "none", marginLeft: 3 }}>
            <circle cx="8" cy="8" r="6" fill="#8a8a90" stroke="#333" strokeWidth=".6" />
            <circle cx="8" cy="8" r="2.500" fill="#ddd" /><path d="M9 16l5-5" stroke="#9cc8f0" />
          </svg>
          <svg width="18" height="18" viewBox="0 0 18 18" style={{ flex: "none", marginLeft: 2 }}>
            <path d="M2 6c4-3 10-3 14 0l-2 3c-3-2-7-2-10 0z" fill="#d8e8f8" />
            <path d="M5 11c2-2 6-2 8 0l-2 2c-1-1-3-1-4 0z" fill="#e8f2fb" /><circle cx="9" cy="15" r="1.500" fill="#e8f2fb" />
          </svg>
          <TrayTime>6:14 PM</TrayTime>
        </Tray>
      </Taskbar>
    </Root>
  );
}
